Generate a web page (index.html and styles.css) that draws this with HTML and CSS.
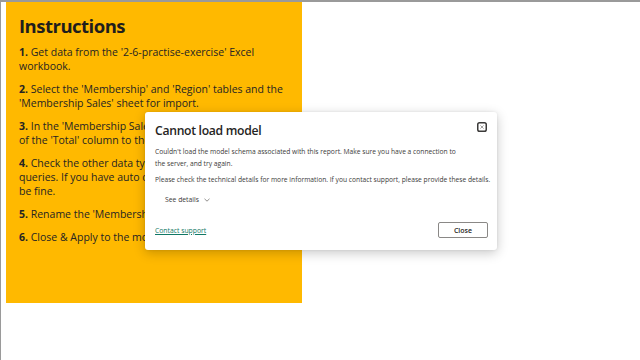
FILE: index.html
```html
<!DOCTYPE html>
<html lang="en">
  <head>
    <meta charset="UTF-8" />
    <meta name="viewport" content="width=device-width, initial-scale=1.0" />
    <title>Report - Instructions</title>
    <link rel="stylesheet" href="styles.css">
  </head>
  <body>
    <div class="canvas">
      <!-- Instructions panel on the report page -->
      <div class="panel">
        <h1>Instructions</h1>
        <p><strong>1.</strong> Get data from the '2-6-practise-exercise' Excel workbook.</p>
        <p><strong>2.</strong> Select the 'Membership' and 'Region' tables and the 'Membership Sales' sheet for import.</p>
        <p><strong>3.</strong> In the 'Membership Sales' query, set the data type<br>of the 'Total' column to the Fixed decimal number.</p>
        <p><strong>4.</strong> Check the other data types in each of the loaded queries. If you have auto detection enabled, they will be fine.</p>
        <p><strong>5.</strong> Rename the 'Membership Sales' query to 'Sales'.</p>
        <p><strong>6.</strong> Close &amp; Apply to the model.</p>
      </div>
    </div>

    <!-- Error dialog -->
    <div class="dialog">
      <div class="dialog-head">
        <h2>Cannot load model</h2>
        <button class="icon-btn" aria-label="Close">
          <svg width="10" height="10" viewBox="0 0 10 10">
            <rect x="0.75" y="0.75" width="8.5" height="8.5" rx="1.8" fill="none" stroke="#3b3a39" stroke-width="1.5"/>
            <path d="M3.4 3.4 L6.6 6.6 M6.6 3.4 L3.4 6.6" stroke="#8a8886" stroke-width="0.8"/>
          </svg>
        </button>
      </div>
      <p class="msg">Couldn't load the model schema associated with this report. Make sure you have a connection to<br>the server, and try again.</p>
      <p class="msg">Please check the technical details for more information. If you contact support, please provide these details.</p>
      <div class="details">
        See details
        <svg width="6" height="4" viewBox="0 0 6 4">
          <path d="M0.5 0.8 L3 3.2 L5.5 0.8" fill="none" stroke="#605e5c" stroke-width="0.7"/>
        </svg>
      </div>
      <div class="dialog-foot">
        <a class="support" href="#">Contact support</a>
        <button class="close-btn">Close</button>
      </div>
    </div>
  </body>
</html>
```

FILE: styles.css
```css
body {
  margin: 0;
  font-family: "Open Sans", "Noto Sans", sans-serif;
  background-color: #fff;
  color: #252423;
  width: 640px;
  height: 360px;
  overflow: hidden;
}

.canvas {
  height: 360px;
  border-top: 2px solid #9a9a9a;
  border-left: 1px solid #9a9a9a;
  padding-left: 5px;
  box-sizing: border-box;
}

.panel {
  background-color: #ffb900; /* Yellow instructions card */
  width: 296px;
  height: 301px;
  padding: 11px 13px;
  box-sizing: border-box;
}

.panel h1 {
  margin: 0 0 6px;
  font-size: 18.5px;
  font-weight: 700;
  letter-spacing: -0.5px;
  color: #1f1e1d;
  line-height: 26px;
}

.panel p {
  margin: 0 0 9px;
  font-size: 10.5px;
  line-height: 14px;
  color: #252423;
}

.panel p strong {
  font-weight: 700;
}

/* Floating dialog over the report */
.dialog {
  position: absolute;
  left: 145px;
  top: 112px;
  width: 352px;
  height: 138px;
  box-sizing: border-box;
  padding: 10px 9px 12px 10px;
  background-color: #fff;
  border-radius: 3px;
  box-shadow: 0 3px 12px rgba(0, 0, 0, 0.22), 0 0 3px rgba(0, 0, 0, 0.08);
  display: flex;
  flex-direction: column;
}

.dialog-head {
  display: flex;
  justify-content: space-between;
  align-items: flex-start;
}

.dialog-head h2 {
  margin: 0;
  font-size: 12.2px;
  font-weight: 600;
  letter-spacing: -0.3px;
  line-height: 18px;
  color: #252423;
}

.icon-btn {
  border: none;
  background: none;
  padding: 0;
  margin: 0 1px 0 0;
  width: 10px;
  height: 10px;
  display: flex;
}

.msg {
  margin: 6px 0 0;
  font-size: 6.7px;
  line-height: 12px;
  color: #3b3a39;
  white-space: nowrap;
}

.msg + .msg {
  margin-top: 4px;
}

.details {
  margin: 8px 0 0 10px;
  font-size: 6.8px;
  line-height: 12px;
  color: #3b3a39;
  display: flex;
  align-items: center;
  gap: 5px;
}

.dialog-foot {
  margin-top: auto;
  display: flex;
  justify-content: space-between;
  align-items: center;
}

.support {
  font-size: 6.8px;
  color: #117865;
  text-decoration: underline;
}

.close-btn {
  width: 50px;
  height: 16px;
  background-color: #fff;
  border: 1px solid #8a8886;
  border-radius: 2px;
  font-family: "Open Sans", "Noto Sans", sans-serif;
  font-size: 7px;
  font-weight: 600;
  color: #252423;
  padding: 0;
}
```
